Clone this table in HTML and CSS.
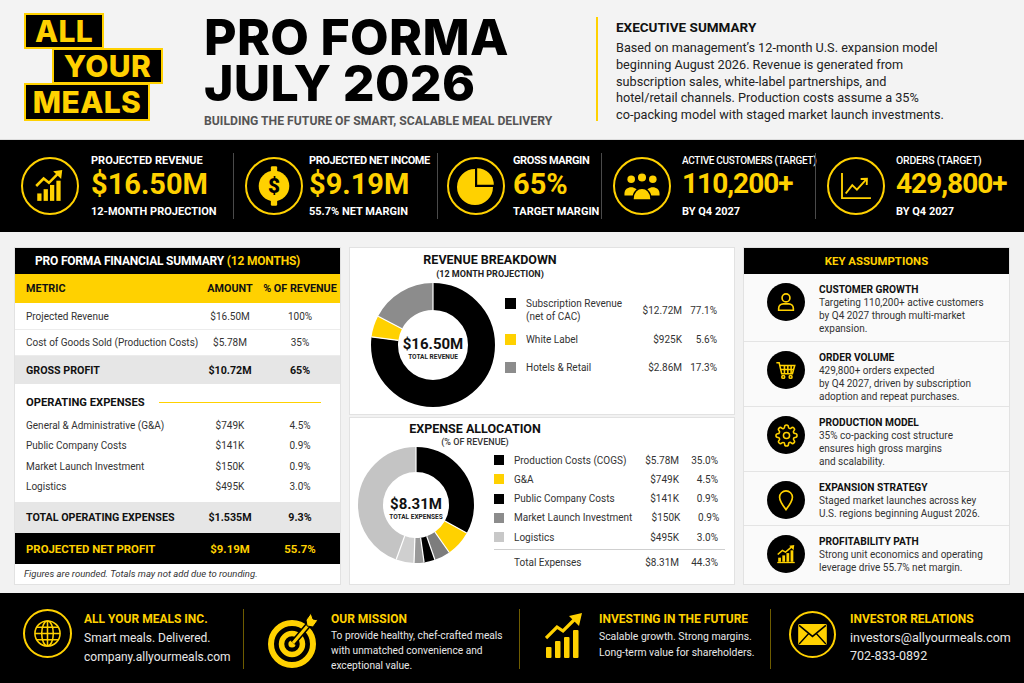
FILE: index.html
```html
<!DOCTYPE html>
<html lang="en">
<head>
<meta charset="utf-8">
<title>Pro Forma July 2026 — All Your Meals</title>
<link rel="stylesheet" href="styles.css">
</head>
<body>
<header class="top">
  <div class="logo">
    <span class="lg lg-all">ALL</span>
    <span class="lg lg-your">YOUR</span>
    <span class="lg lg-meals">MEALS</span>
  </div>
  <div class="title">
    <h1><span class="tl">PRO FORMA</span><span class="tl">JULY 2026</span></h1>
    <p class="tagline">BUILDING THE FUTURE OF SMART, SCALABLE MEAL DELIVERY</p>
  </div>
  <div class="exec">
    <h2>EXECUTIVE SUMMARY</h2>
    <p>Based on management’s 12-month U.S. expansion model<br>beginning August 2026. Revenue is generated from<br>subscription sales, white-label partnerships, and<br>hotel/retail channels. Production costs assume a 35%<br>co-packing model with staged market launch investments.</p>
  </div>
</header>

<section class="kpis">
  <div class="kpi k1">
    <div class="kicon">
      <svg viewBox="0 0 32 32" width="34" height="34">
        <g fill="#FFD100"><rect x="4" y="23" width="4" height="7"/><rect x="10" y="19" width="4" height="11"/><rect x="16" y="15" width="4" height="15"/><rect x="22" y="11" width="4" height="19"/></g>
        <polyline points="3,16 10,9 15,13 24.5,3.5" fill="none" stroke="#FFD100" stroke-width="2.4"/>
        <polygon points="19,2 27.5,1 26.5,9.5" fill="#FFD100"/>
      </svg>
    </div>
    <div class="ktext"><div class="klabel">PROJECTED REVENUE</div><div class="kval">$16.50M</div><div class="ksub">12-MONTH PROJECTION</div></div>
  </div>
  <div class="kpi k2">
    <div class="kicon">
      <svg viewBox="0 0 40 44" width="36" height="40">
        <rect x="16.5" y="0" width="7" height="7" rx="1.5" fill="#FFD100"/>
        <rect x="16.5" y="37" width="7" height="7" rx="1.5" fill="#FFD100"/>
        <circle cx="20" cy="22" r="17" fill="#FFD100"/>
        <text x="20" y="30" text-anchor="middle" font-family="Roboto, sans-serif" font-weight="900" font-size="23" fill="#000">$</text>
      </svg>
    </div>
    <div class="ktext"><div class="klabel">PROJECTED NET INCOME</div><div class="kval">$9.19M</div><div class="ksub">55.7% NET MARGIN</div></div>
  </div>
  <div class="kpi k3">
    <div class="kicon">
      <svg viewBox="0 0 40 40" width="40" height="40">
        <path d="M19 21 V3 A18 18 0 1 0 37 21 Z" fill="#FFD100"/>
        <path d="M21.2 18.8 V2.2 A16.6 16.6 0 0 1 37.8 18.8 Z" fill="#FFD100"/>
      </svg>
    </div>
    <div class="ktext"><div class="klabel">GROSS MARGIN</div><div class="kval">65%</div><div class="ksub">TARGET MARGIN</div></div>
  </div>
  <div class="kpi k4">
    <div class="kicon">
      <svg viewBox="0 0 40 32" width="36" height="29">
        <g fill="#FFD100">
          <circle cx="8" cy="8" r="4.2"/><circle cx="32" cy="8" r="4.2"/>
          <path d="M0.5 24 C0.5 14.5 15.5 14.5 15.5 24 V26 H0.5Z"/>
          <path d="M24.5 24 C24.5 14.5 39.5 14.5 39.5 24 V26 H24.5Z"/>
          <circle cx="20" cy="6" r="5.2" stroke="#000" stroke-width="1.4"/>
          <path d="M10 30 C10 14 30 14 30 30 V31 H10Z" stroke="#000" stroke-width="1.6"/>
        </g>
      </svg>
    </div>
    <div class="ktext"><div class="klabel">ACTIVE CUSTOMERS (TARGET)</div><div class="kval kn">110,200+</div><div class="ksub">BY Q4 2027</div></div>
  </div>
  <div class="kpi k5">
    <div class="kicon">
      <svg viewBox="0 0 34 30" width="32" height="28">
        <g fill="none" stroke="#FFD100" stroke-width="2">
          <polyline points="2,1 2,28 33,28"/>
          <polyline points="6,23 13,14 18,19 28,8"/>
          <polyline points="22,7.5 28.7,7.3 28.5,14"/>
        </g>
      </svg>
    </div>
    <div class="ktext"><div class="klabel">ORDERS (TARGET)</div><div class="kval kn">429,800+</div><div class="ksub">BY Q4 2027</div></div>
  </div>
</section>

<main class="main">
  <section class="card fin">
    <div class="fin-head">PRO FORMA FINANCIAL SUMMARY&nbsp;<span class="y">(12 MONTHS)</span></div>
    <div class="frow fhead"><span>METRIC</span><span>AMOUNT</span><span>% OF REVENUE</span></div>
    <div class="frow fline f27"><span>Projected Revenue</span><span>$16.50M</span><span>100%</span></div>
    <div class="frow fline"><span>Cost of Goods Sold (Production Costs)</span><span>$5.78M</span><span>35%</span></div>
    <div class="frow fbold"><span>GROSS PROFIT</span><span>$10.72M</span><span>65%</span></div>
    <div class="opex-head">OPERATING EXPENSES</div>
    <div class="frow fsub"><span>General &amp; Administrative (G&amp;A)</span><span>$749K</span><span>4.5%</span></div>
    <div class="frow fsub"><span>Public Company Costs</span><span>$141K</span><span>0.9%</span></div>
    <div class="frow fsub"><span>Market Launch Investment</span><span>$150K</span><span>0.9%</span></div>
    <div class="frow fsub"><span>Logistics</span><span>$495K</span><span>3.0%</span></div>
    <div class="frow fbold ftotal"><span>TOTAL OPERATING EXPENSES</span><span>$1.535M</span><span>9.3%</span></div>
    <div class="frow fnet"><span>PROJECTED NET PROFIT</span><span>$9.19M</span><span>55.7%</span></div>
    <p class="fnote">Figures are rounded. Totals may not add due to rounding.</p>
  </section>

  <div class="mid">
    <section class="card chart rev">
      <div class="chead"><h3>REVENUE BREAKDOWN</h3><p>(12 MONTH PROJECTION)</p></div>
      <div class="cbody">
        <div class="donut">
          <svg viewBox="0 0 124 124" width="124" height="124">
            <g transform="rotate(-90 62 62)" fill="none" stroke-width="27">
              <circle cx="62" cy="62" r="48.5" pathLength="100" stroke="#000" stroke-dasharray="77.1 100"/>
              <circle cx="62" cy="62" r="48.5" pathLength="100" stroke="#FFD100" stroke-dasharray="5.6 100" stroke-dashoffset="-77.1"/>
              <circle cx="62" cy="62" r="48.5" pathLength="100" stroke="#8c8c8c" stroke-dasharray="17.3 100" stroke-dashoffset="-82.7"/>
            </g>
            <g stroke="#fff" stroke-width="1.2">
              <line x1="62" y1="27" x2="62" y2="0"/>
              <line x1="27.3" y1="57.4" x2="0.5" y2="53.8"/>
              <line x1="31" y1="45.7" x2="7.1" y2="33.2"/>
            </g>
          </svg>
          <div class="dcenter"><b>$16.50M</b><small>TOTAL REVENUE</small></div>
        </div>
        <div class="legend lrev">
          <div class="lrow ltall"><i class="sq blk"></i><span class="ll">Subscription Revenue<br>(net of CAC)</span><span class="la">$12.72M</span><span class="lp">77.1%</span></div>
          <div class="lrow"><i class="sq yel"></i><span class="ll">White Label</span><span class="la">$925K</span><span class="lp">5.6%</span></div>
          <div class="lrow"><i class="sq gry"></i><span class="ll">Hotels &amp; Retail</span><span class="la">$2.86M</span><span class="lp">17.3%</span></div>
        </div>
      </div>
    </section>

    <section class="card chart exp">
      <div class="chead"><h3>EXPENSE ALLOCATION</h3><p>(% OF REVENUE)</p></div>
      <div class="cbody">
        <div class="donut">
          <svg viewBox="0 0 116 116" width="116" height="116">
            <g transform="rotate(-90 58 58)" fill="none" stroke-width="25">
              <circle cx="58" cy="58" r="45.5" pathLength="100" stroke="#000" stroke-dasharray="33.06 100"/>
              <circle cx="58" cy="58" r="45.5" pathLength="100" stroke="#FFD100" stroke-dasharray="7.22 100" stroke-dashoffset="-33.06"/>
              <circle cx="58" cy="58" r="45.5" pathLength="100" stroke="#7d7d7d" stroke-dasharray="4.44 100" stroke-dashoffset="-40.28"/>
              <circle cx="58" cy="58" r="45.5" pathLength="100" stroke="#000" stroke-dasharray="3.06 100" stroke-dashoffset="-44.72"/>
              <circle cx="58" cy="58" r="45.5" pathLength="100" stroke="#999" stroke-dasharray="2.78 100" stroke-dashoffset="-47.78"/>
              <circle cx="58" cy="58" r="45.5" pathLength="100" stroke="#cfcfcf" stroke-dasharray="5 100" stroke-dashoffset="-50.56"/>
              <circle cx="58" cy="58" r="45.5" pathLength="100" stroke="#c4c4c4" stroke-dasharray="44.44 100" stroke-dashoffset="-55.56"/>
            </g>
            <g stroke="#fff" stroke-width="1.2">
              <line x1="58" y1="25" x2="58" y2="0"/>
              <line x1="86.9" y1="74" x2="108.7" y2="86.1"/>
              <line x1="76.9" y1="85" x2="91.3" y2="105.5"/>
              <line x1="68.7" y1="89.2" x2="76.9" y2="112.8"/>
              <line x1="62.6" y1="90.7" x2="66.1" y2="115.4"/>
              <line x1="56.9" y1="91" x2="56" y2="116"/>
              <line x1="46.7" y1="89" x2="38.2" y2="112.5"/>
            </g>
          </svg>
          <div class="dcenter"><b>$8.31M</b><small>TOTAL EXPENSES</small></div>
        </div>
        <div class="legend lexp">
          <div class="lrow"><i class="sq blk"></i><span class="ll">Production Costs (COGS)</span><span class="la">$5.78M</span><span class="lp">35.0%</span></div>
          <div class="lrow"><i class="sq yel"></i><span class="ll">G&amp;A</span><span class="la">$749K</span><span class="lp">4.5%</span></div>
          <div class="lrow"><i class="sq blk"></i><span class="ll">Public Company Costs</span><span class="la">$141K</span><span class="lp">0.9%</span></div>
          <div class="lrow"><i class="sq gry"></i><span class="ll">Market Launch Investment</span><span class="la">$150K</span><span class="lp">0.9%</span></div>
          <div class="lrow"><i class="sq lgt"></i><span class="ll">Logistics</span><span class="la">$495K</span><span class="lp">3.0%</span></div>
          <div class="lrow ltotal"><i></i><span class="ll">Total Expenses</span><span class="la">$8.31M</span><span class="lp">44.3%</span></div>
        </div>
      </div>
    </section>
  </div>

  <section class="card ka">
    <div class="ka-head">KEY ASSUMPTIONS</div>
    <div class="ka-item h68">
      <div class="ka-ic"><svg viewBox="0 0 24 24" width="22" height="22" fill="none" stroke="#FFD100" stroke-width="1.8"><circle cx="12" cy="7.5" r="4.3"/><path d="M4 21 V19 a5 5 0 0 1 5-5 h6 a5 5 0 0 1 5 5 V21 Z"/></svg></div>
      <div class="ka-text"><h4>CUSTOMER GROWTH</h4><p>Targeting 110,200+ active customers<br>by Q4 2027 through multi-market<br>expansion.</p></div>
    </div>
    <div class="ka-item h65">
      <div class="ka-ic"><svg viewBox="0 0 24 24" width="22" height="22" fill="none" stroke="#FFD100" stroke-width="1.7"><path d="M1.5 4 H4.5 L7.3 16 H19 L21.5 7 H5.5"/><path d="M10.3 7 V16 M14 7 V16 M17.6 7 V16 M6.5 11.5 H20.3"/><circle cx="9" cy="19.5" r="1.6"/><circle cx="17" cy="19.5" r="1.6"/></svg></div>
      <div class="ka-text"><h4>ORDER VOLUME</h4><p>429,800+ orders expected<br>by Q4 2027, driven by subscription<br>adoption and repeat purchases.</p></div>
    </div>
    <div class="ka-item h65">
      <div class="ka-ic"><svg viewBox="0 0 24 24" width="23" height="23" fill="none" stroke="#FFD100" stroke-width="1.6"><circle cx="12" cy="12" r="3.2"/><path d="M19.4 15a1.65 1.65 0 0 0 .33 1.82l.06.06a2 2 0 0 1-2.83 2.83l-.06-.06a1.65 1.65 0 0 0-1.82-.33 1.65 1.65 0 0 0-1 1.51V21a2 2 0 0 1-4 0v-.09A1.65 1.65 0 0 0 9 19.4a1.65 1.65 0 0 0-1.82.33l-.06.06a2 2 0 0 1-2.83-2.83l.06-.06a1.65 1.65 0 0 0 .33-1.82 1.65 1.65 0 0 0-1.51-1H3a2 2 0 0 1 0-4h.09A1.65 1.65 0 0 0 4.6 9a1.65 1.65 0 0 0-.33-1.82l-.06-.06a2 2 0 0 1 2.83-2.83l.06.06a1.65 1.65 0 0 0 1.82.33H9a1.65 1.65 0 0 0 1-1.51V3a2 2 0 0 1 4 0v.09a1.65 1.65 0 0 0 1 1.51 1.65 1.65 0 0 0 1.82-.33l.06-.06a2 2 0 0 1 2.83 2.83l-.06.06a1.65 1.65 0 0 0-.33 1.82V9a1.65 1.65 0 0 0 1.51 1H21a2 2 0 0 1 0 4h-.09a1.65 1.65 0 0 0-1.51 1z"/></svg></div>
      <div class="ka-text"><h4>PRODUCTION MODEL</h4><p>35% co-packing cost structure<br>ensures high gross margins<br>and scalability.</p></div>
    </div>
    <div class="ka-item h54">
      <div class="ka-ic"><svg viewBox="0 0 24 24" width="22" height="22" fill="none" stroke="#FFD100" stroke-width="1.8"><path d="M12 22.5 C12 22.5 5 13.5 5 9 a7 7 0 0 1 14 0 c0 4.5-7 13.5-7 13.5z"/></svg></div>
      <div class="ka-text"><h4>EXPANSION STRATEGY</h4><p>Staged market launches across key<br>U.S. regions beginning August 2026.</p></div>
    </div>
    <div class="ka-item hlast">
      <div class="ka-ic"><svg viewBox="0 0 24 24" width="22" height="22"><g fill="#FFD100"><rect x="3.5" y="16" width="3" height="4.5"/><rect x="8" y="13.5" width="3" height="7"/><rect x="12.5" y="11" width="3" height="9.5"/><rect x="17" y="8" width="3" height="12.5"/></g><path d="M2.5 21.3 H21.5" stroke="#FFD100" stroke-width="1.4"/><polyline points="3,12.5 8,8 11.5,10 18.5,4" fill="none" stroke="#FFD100" stroke-width="1.7"/><polygon points="15.5,3 21,2.3 20.3,7.8" fill="#FFD100"/></svg></div>
      <div class="ka-text"><h4>PROFITABILITY PATH</h4><p>Strong unit economics and operating<br>leverage drive 55.7% net margin.</p></div>
    </div>
  </section>
</main>

<footer class="foot">
  <div class="fi fi1">
    <div class="fic ring">
      <svg viewBox="0 0 30 30" width="29" height="29" fill="none" stroke="#FFD100" stroke-width="1.6"><circle cx="15" cy="15" r="13"/><ellipse cx="15" cy="15" rx="6" ry="13"/><path d="M15 2 V28 M2 15 H28 M4 8.5 H26 M4 21.5 H26"/></svg>
    </div>
    <div class="ft t1"><h5>ALL YOUR MEALS INC.</h5><p>Smart meals. Delivered.<br>company.allyourmeals.com</p></div>
  </div>
  <div class="fi fi2">
    <div class="fic">
      <svg viewBox="0 0 50 60" width="50" height="60">
        <circle cx="24" cy="35" r="21" fill="none" stroke="#FFD100" stroke-width="6"/>
        <circle cx="24" cy="35" r="10.5" fill="none" stroke="#FFD100" stroke-width="5.5"/>
        <circle cx="24" cy="35" r="3.6" fill="#FFD100"/>
        <line x1="25" y1="34" x2="42" y2="14" stroke="#000" stroke-width="6"/>
        <line x1="25" y1="34" x2="42" y2="14" stroke="#FFD100" stroke-width="3"/>
        <polygon points="38,11 43,4 45,10 50,11 45,18 39,17" fill="#FFD100" stroke="#000" stroke-width="1"/>
      </svg>
    </div>
    <div class="ft t2"><h5>OUR MISSION</h5><p>To provide healthy, chef-crafted meals<br>with unmatched convenience and<br>exceptional value.</p></div>
  </div>
  <div class="fi fi3">
    <div class="fic">
      <svg viewBox="0 0 38 46" width="38" height="46">
        <g fill="#FFD100"><rect x="1" y="34" width="5.5" height="11" rx="1"/><rect x="10" y="28" width="5.5" height="17" rx="1"/><rect x="19" y="24" width="5.5" height="21" rx="1"/><rect x="28" y="17" width="5.5" height="28" rx="1"/></g>
        <polyline points="1,25 12,14 18,18 31,5" fill="none" stroke="#FFD100" stroke-width="3.2"/>
        <polygon points="24,3 37,0 34,13" fill="#FFD100"/>
      </svg>
    </div>
    <div class="ft t3"><h5>INVESTING IN THE FUTURE</h5><p>Scalable growth. Strong margins.<br>Long-term value for shareholders.</p></div>
  </div>
  <div class="fi fi4">
    <div class="fic ring ring4">
      <svg viewBox="0 0 30 22" width="29" height="21"><rect x="0" y="0" width="30" height="22" rx="1.5" fill="#FFD100"/><polyline points="1,1.5 15,13 29,1.5" fill="none" stroke="#000" stroke-width="1.6"/><path d="M1 21 L11 10 M29 21 L19 10" stroke="#000" stroke-width="1.4"/></svg>
    </div>
    <div class="ft t4"><h5>INVESTOR RELATIONS</h5><p>investors@allyourmeals.com<br>702-833-0892</p></div>
  </div>
</footer>
</body>
</html>
```

FILE: styles.css
```css
*{box-sizing:border-box;margin:0;padding:0}
html,body{width:1024px;height:683px;overflow:hidden}
body{background:#f2f2f2;font-family:Roboto,"Liberation Sans",sans-serif;color:#1a1a1a}
.y{color:#FFD100}

/* ---------- header ---------- */
.top{height:140px;display:flex;padding:13px 0 0 24px;border-bottom:1px solid #dcdcdc;background:#f3f3f3}
.logo{width:180px;flex:none;display:flex;flex-direction:column;align-items:flex-start}
.lg{display:flex;align-items:center;justify-content:center;background:#000;color:#FFD100;border:2.5px solid #FFD100;font-family:Inter,Roboto,sans-serif;font-weight:800;font-size:30px;letter-spacing:0.4px;line-height:1}
.lg-all{width:80px;height:36px}
.lg-your{width:111px;height:36px;margin:-1px 0 0 28px}
.lg-meals{width:126px;height:38px;margin-top:-1px}
.title{width:392px;flex:none;padding-top:5px}
.title h1{font-family:Inter,Roboto,sans-serif;font-weight:800;font-size:50px;letter-spacing:0.3px;color:#000}
.tl{display:block;height:46px;line-height:38px;overflow:visible}
.tagline{margin-top:4px;font-weight:700;font-size:12.2px;line-height:15px;color:#555;white-space:nowrap}
.exec{margin-top:4px;height:104px;border-left:2px solid #FFD100;padding:2px 0 0 18px}
.exec h2{font-size:13.5px;font-weight:700;line-height:17px;color:#111}
.exec p{margin-top:4px;font-size:12.7px;line-height:16.8px;color:#222;white-space:nowrap}

/* ---------- KPI band ---------- */
.kpis{height:92px;background:#000;display:grid;grid-template-columns:233px 204px 164px 214px 1fr;align-items:center}
.kpi{height:66px;display:flex;align-items:center;gap:11px;padding-left:11px;border-left:1px solid #4a4a4a}
.kpi.k1{border-left:0;padding-left:21px;gap:12px}
.kpi.k2{gap:6px}
.kpi.k3{padding-left:9px;gap:8px}
.kicon{flex:none;width:58px;height:58px;border:2px solid #FFD100;border-radius:50%;display:flex;align-items:center;justify-content:center}
.klabel{font-size:11px;font-weight:700;line-height:14px;color:#fff;white-space:nowrap}
.k2 .klabel{letter-spacing:-0.4px}
.k3 .klabel{letter-spacing:-0.4px}
.k4 .klabel{font-size:10px;font-weight:500;letter-spacing:-0.3px}
.k5 .klabel{font-size:10.5px;font-weight:500;letter-spacing:-0.2px}
.kval{font-size:29px;font-weight:700;line-height:32px;color:#FFD100;white-space:nowrap}
.kval.kn{font-size:28px;letter-spacing:-1px}
.ksub{margin-top:5px;font-size:11px;font-weight:700;line-height:14px;color:#fff;white-space:nowrap}

/* ---------- main grid ---------- */
.main{display:grid;grid-template-columns:325px 384px 265px;column-gap:10px;padding:16px 0 0 15px;height:351px}
.card{background:#fff;box-shadow:0 0 0 1px #e2e2e2}

/* financial summary */
.fin{display:flex;flex-direction:column}
.fin-head{height:26px;flex:none;background:#000;color:#fff;font-weight:700;font-size:12px;letter-spacing:-0.2px;display:flex;align-items:center;padding-left:20px}
.frow{display:grid;grid-template-columns:185px 60px 80px;align-items:center;font-size:10px;color:#333;flex:none}
.frow span{text-align:center;white-space:nowrap}
.frow span:first-child{text-align:left;padding-left:11px}
.fhead{height:29px;background:#FFD100;font-weight:700;font-size:10.8px;color:#111}
.fline{height:26px;border-bottom:1px solid #ececec}
.fline.f27{height:27px}
.fbold{height:28px;background:#e6e6e6;font-weight:700;font-size:10.7px;color:#111}
.opex-head{height:31px;flex:none;display:flex;align-items:flex-end;gap:14px;padding:0 19px 6px 11px;font-weight:700;font-size:11.2px;color:#111}
.opex-head::after{content:"";flex:1;height:1.5px;background:#FFD100;margin-bottom:6px}
.fsub{height:20.5px}
.ftotal{height:31px;margin-top:5px}
.fnet{height:31px;background:#000;color:#FFD100;font-weight:700;font-size:11.4px}
.fnote{font-style:italic;font-size:9.5px;line-height:12px;padding:4px 0 0 9px;color:#333}

/* charts */
.mid{display:flex;flex-direction:column;gap:4px}
.chart{height:166px;display:flex;flex-direction:column}
.chead{text-align:center}
.chead h3{font-size:12.5px;font-weight:700;line-height:16px;color:#111}
.chead p{font-size:9px;font-weight:700;color:#222}
.rev .chead{width:280px;padding-top:4px}
.rev .chead p{line-height:12px}
.exp .chead{width:250px;padding-top:3px}
.exp .chead p{line-height:10px;font-weight:500;color:#333}
.cbody{display:flex;align-items:flex-start}
.rev .cbody{padding-left:21px;margin-top:3px;gap:10px}
.exp .cbody{padding-left:8px;gap:20px}
.donut{position:relative;flex:none}
.donut svg{display:block}
.dcenter{position:absolute;inset:0;display:flex;flex-direction:column;align-items:center;justify-content:center;padding-top:6px}
.dcenter b{font-size:15px;font-weight:700;line-height:18px;color:#111}
.dcenter small{font-size:6.5px;font-weight:700;line-height:9px;color:#222}
.legend{font-size:10px;color:#333}
.lrow{display:grid;align-items:center}
.lrow .la,.lrow .lp{text-align:right;white-space:nowrap}
.ll{white-space:nowrap}
.lrev{width:212px;margin-top:12px}
.lrev .lrow{grid-template-columns:21px 1fr 50px 35px;height:28px}
.lrev .lrow.ltall{height:30px}
.ltall .sq{align-self:start;margin-top:3px}
.ltall .ll{line-height:13px}
.lexp{width:231px;margin-top:3.5px;padding-right:7px}
.lexp .lrow{grid-template-columns:20px 1fr 48px 39px;height:19.25px}
.lexp .lrow.ltotal{height:26px;margin:2px -7px 0 0;padding-right:7px;border-top:1px solid #cfcfcf}
.sq{display:block;width:11px;height:11px}
.lexp .sq{width:10px;height:10px}
.blk{background:#000}
.yel{background:#FFD100}
.gry{background:#8c8c8c}
.lgt{background:#c8c8c8}

/* key assumptions */
.ka{display:flex;flex-direction:column;background:#fafafa}
.ka-head{height:26px;flex:none;background:#000;color:#FFD100;font-weight:700;font-size:11.4px;display:flex;align-items:center;justify-content:center}
.ka-item{flex:none;display:flex;align-items:flex-start;gap:14px;padding:9px 6px 0 23px;border-bottom:1px solid #e4e4e4}
.h68{height:68px}
.h65{height:65px}
.h54{height:54px}
.hlast{flex:1;border-bottom:0}
.ka-ic{flex:none;width:38px;height:38px;border-radius:50%;background:#000;display:flex;align-items:center;justify-content:center}
.ka-text h4{font-size:10.2px;font-weight:700;line-height:13px;color:#111}
.ka-text p{font-size:10px;line-height:13px;color:#333;white-space:nowrap}

/* footer */
.foot{margin-top:10px;height:90px;background:#000;display:grid;grid-template-columns:243px 276px 251px 1fr;padding-top:16px}
.fi{height:60px;display:flex;align-items:flex-start;border-left:1px solid #6e5c00}
.fi1{border-left:0;padding-left:23px;gap:12px}
.fi2{padding-left:24px;gap:13px}
.fi3{padding-left:25px;gap:16px}
.fi4{padding-left:18px;gap:14px}
.fic{flex:none;display:flex;align-items:center;justify-content:center}
.fic svg{display:block}
.ring{width:49px;height:49px;border:2px solid #FFD100;border-radius:50%}
.ring4{width:47px;height:47px;margin-top:2px}
.fi3 .fic{margin-top:4px}
.ft h5{font-size:12px;font-weight:700;line-height:14px;color:#FFD100;margin-top:2.5px;white-space:nowrap}
.ft p{color:#e8e8e8;white-space:nowrap}
.t1 p{font-size:12px;line-height:19px;margin-top:3px}
.t2 p{font-size:10.2px;line-height:15px;margin-top:2px}
.t3 p{font-size:10.4px;line-height:16px;margin-top:3.5px}
.t4 p{font-size:12.5px;line-height:18px;margin-top:3.5px}
```
